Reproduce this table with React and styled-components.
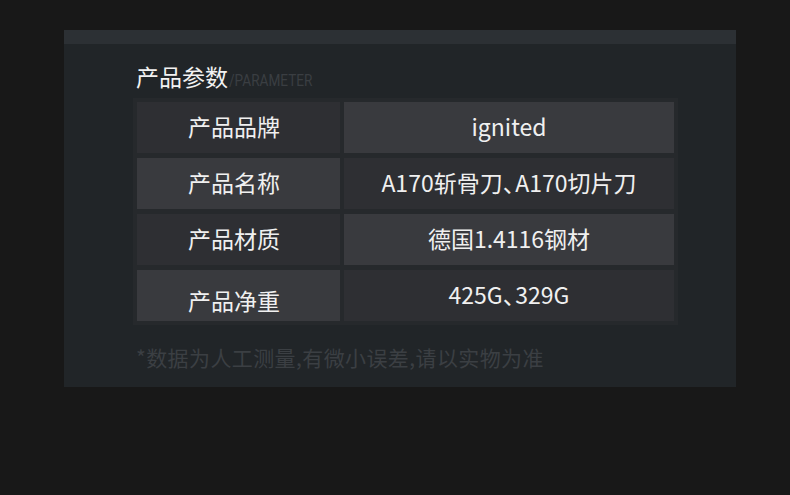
import React from 'react'
import styled, { createGlobalStyle } from 'styled-components'

const GlobalStyle = createGlobalStyle`
  html, body {
    margin: 0;
    padding: 0;
    background: #181818;
  }
  body {
    font-family: "Noto Sans CJK SC", "Noto Sans", sans-serif;
  }
`

const Page = styled.div`
  width: 790px;
  height: 495px;
  padding-top: 30px;
  box-sizing: border-box;
`

const Panel = styled.div`
  margin-left: 64px;
  width: 672px;
  height: 357px;
  background: #212528;
  border-top: 14px solid #2c3034;
  box-sizing: border-box;
  padding: 16px 0 0 69px;
`

const Heading = styled.div`
  display: flex;
  align-items: flex-end;
  height: 34px;
  color: #f2f2f2;
  font-size: 23px;
  line-height: 32px;
  padding-left: 3px;
  margin-top: -2px;
`

const Sub = styled.span`
  display: inline-block;
  font-family: Roboto, "Liberation Sans", sans-serif;
  font-size: 17px;
  line-height: 24px;
  color: #3a3e42;
  transform: scaleX(0.8);
  transform-origin: left center;
  margin-left: 1px;
`

const Table = styled.div`
  margin-top: 6px;
  width: 545px;
  background: #26292c;
  padding: 4px;
  box-sizing: border-box;
  display: grid;
  grid-template-columns: 203px 330px;
  grid-auto-rows: 51px;
  column-gap: 4px;
  row-gap: 5px;
`

const Cell = styled.div`
  background: ${p => (p.$light ? '#393a3e' : '#2e2f33')};
  color: #f0f0f0;
  font-size: 23px;
  display: flex;
  align-items: center;
  justify-content: center;
  padding-top: ${p => p.$shift || 0}px;
  padding-bottom: 3px;
  padding-right: ${p => (p.$label ? 9 : 0)}px;
  box-sizing: border-box;
`

const Punct = styled.span`
  letter-spacing: -0.45em;
`

const Note = styled.div`
  margin-top: 17px;
  padding-left: 3px;
  font-size: 21px;
  letter-spacing: 0.4px;
  color: #3b3f43;
`

const Value = ({ text }) => {
  const parts = text.split('、')
  return parts.map((p, i) => (
    <React.Fragment key={i}>
      {p}
      {i < parts.length - 1 && <Punct>、</Punct>}
    </React.Fragment>
  ))
}

const rows = [
  ['产品品牌', 'ignited'],
  ['产品名称', 'A170斩骨刀、A170切片刀'],
  ['产品材质', '德国1.4116钢材'],
  ['产品净重', '425G、329G'],
]

export default function App() {
  return (
    <Page>
      <GlobalStyle />
      <Panel>
        <Heading>
          产品参数<Sub>/PARAMETER</Sub>
        </Heading>
        <Table>
          {rows.map(([k, v], i) => (
            <React.Fragment key={k}>
              <Cell $label $light={i % 2 === 1} $shift={i === 3 ? 12 : 0}>{k}</Cell>
              <Cell $light={i % 2 === 0}><Value text={v} /></Cell>
            </React.Fragment>
          ))}
        </Table>
        <Note>*数据为人工测量,有微小误差,请以实物为准</Note>
      </Panel>
    </Page>
  )
}
